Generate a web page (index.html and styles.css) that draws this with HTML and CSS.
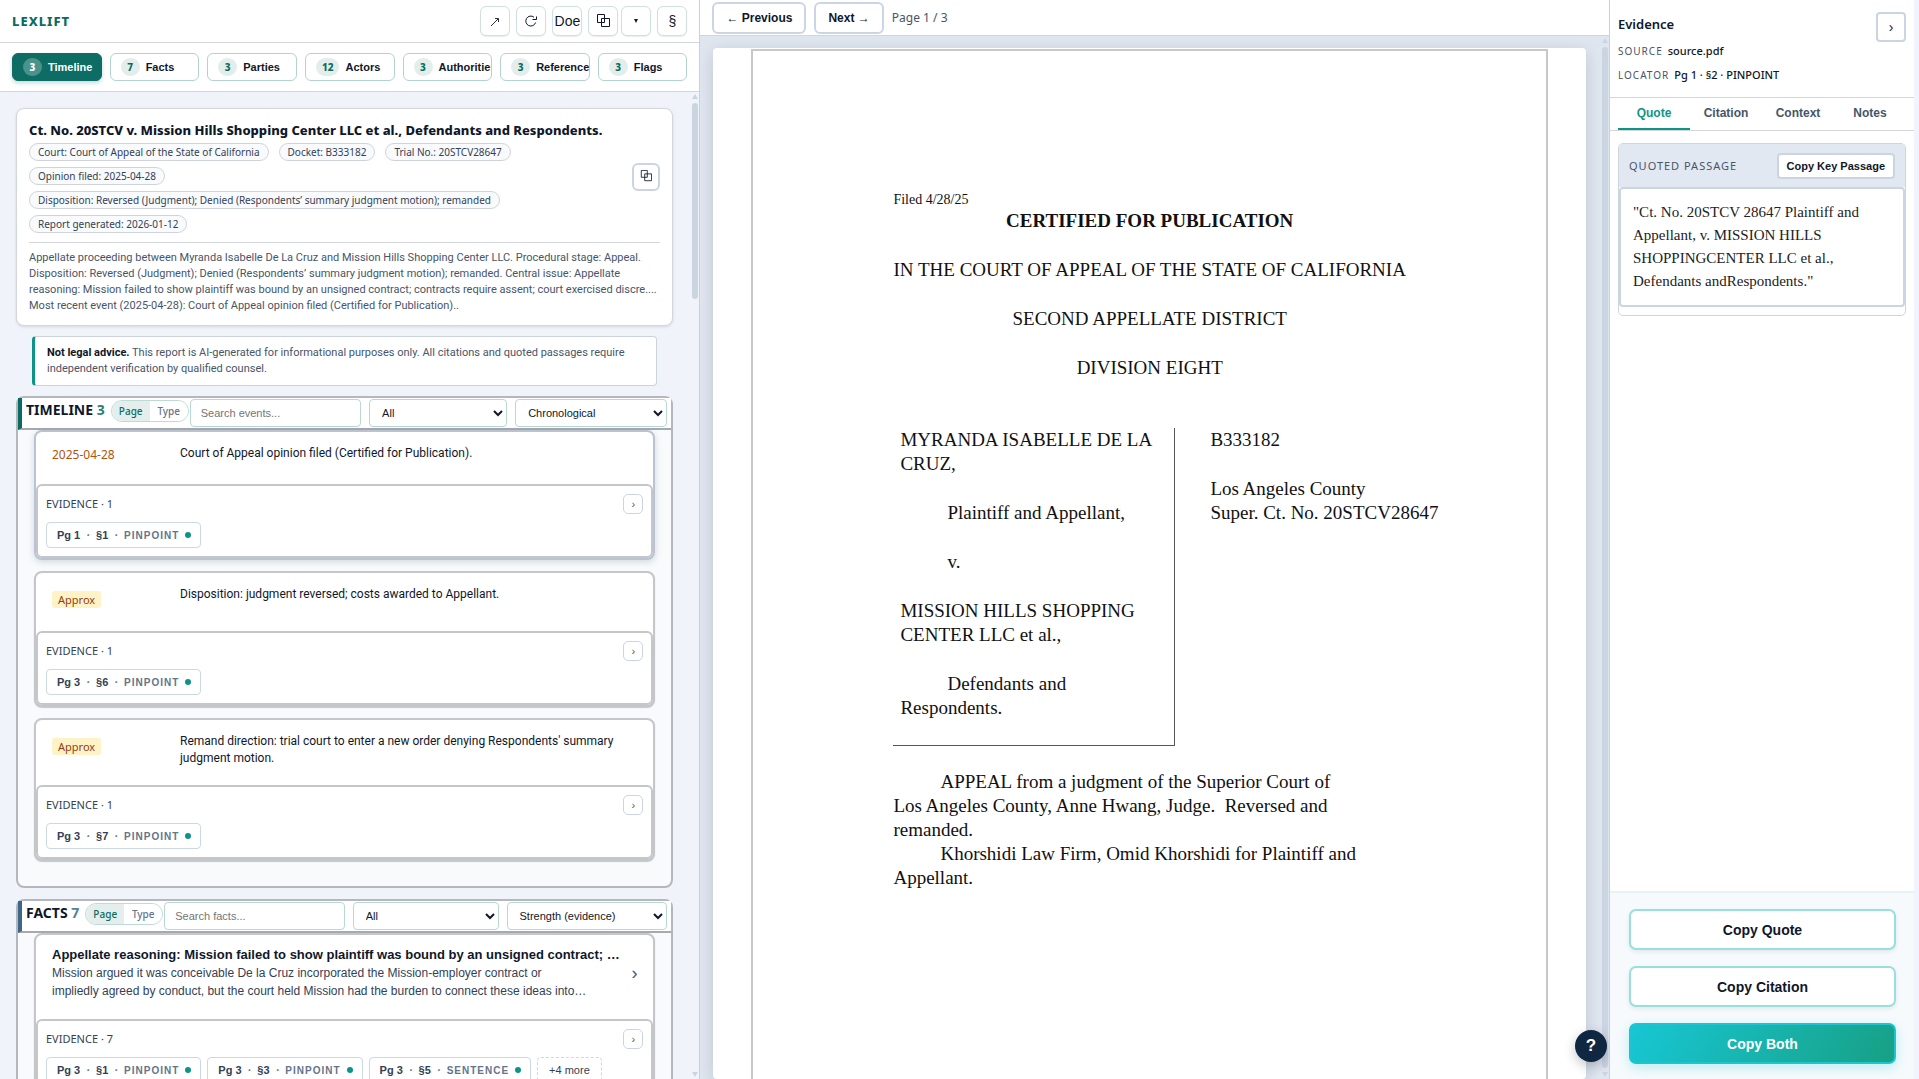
FILE: index.html
```html
<!DOCTYPE html>
<html lang="en">
<head>
<meta charset="utf-8">
<title>LexLift report</title>
<link rel="stylesheet" href="styles.css">
</head>
<body>
<svg class="defs" aria-hidden="true">
  <symbol id="copy" viewBox="0 0 14 14"><path d="M1.500 .5h7v8h-7zM5.500 4.500h8v8h-8z" fill="none" stroke="currentColor"/></symbol>
</svg>
<div class="app">
  <section class="report">
    <header class="topbar">
      <span class="brand">LEXLIFT</span>
      <div class="tools">
        <button class="tool" aria-label="Open"><svg width="12" height="12" viewBox="0 0 12 12"><path d="M2 11 9 4M6 3.500H9.500V7" fill="none" stroke="currentColor" stroke-width=".9"/></svg></button>
        <button class="tool" aria-label="Refresh"><svg width="14" height="14" viewBox="0 0 14 14"><path d="M10 3.200A5 5 0 1 0 11.600 8.500M12.500 2.500V5.500H8.500" fill="none" stroke="currentColor"/></svg></button>
        <button class="tool">Doe</button>
        <span class="split">
          <button class="tool" aria-label="Copy"><svg width="14" height="14"><use href="#copy"/></svg></button>
          <button class="tool" aria-label="More"><svg width="4" height="4" viewBox="0 0 4 4"><path d="M0 0h4L2 4z" fill="currentColor"/></svg></button>
        </span>
        <button class="tool">§</button>
      </div>
    </header>
    <nav class="tabs">
      <button class="tab active"><b class="count">3</b>Timeline</button>
      <button class="tab"><b class="count">7</b>Facts</button>
      <button class="tab"><b class="count">3</b>Parties</button>
      <button class="tab"><b class="count">12</b>Actors</button>
      <button class="tab"><b class="count">3</b>Authorities</button>
      <button class="tab"><b class="count">3</b>References</button>
      <button class="tab"><b class="count">3</b>Flags</button>
    </nav>
    <div class="scroller">
      <main class="content">
        <article class="case">
          <div class="case-head">
            <div class="case-info">
              <h1>Ct. No. 20STCV v. Mission Hills Shopping Center LLC et al., Defendants and Respondents.</h1>
              <ul class="chips">
                <li>Court: Court of Appeal of the State of California</li>
                <li>Docket: B333182</li>
                <li>Trial No.: 20STCV28647</li>
                <li>Opinion filed: 2025-04-28</li>
                <li>Disposition: Reversed (Judgment); Denied (Respondents’ summary judgment motion); remanded</li>
                <li>Report generated: 2026-01-12</li>
              </ul>
            </div>
            <button class="copy-case" aria-label="Copy case"><svg width="12" height="12"><use href="#copy"/></svg></button>
          </div>
          <p class="summary">Appellate proceeding between Myranda Isabelle De La Cruz and Mission Hills Shopping Center LLC. Procedural stage: Appeal.<br>Disposition: Reversed (Judgment); Denied (Respondents’ summary judgment motion); remanded. Central issue: Appellate<br>reasoning: Mission failed to show plaintiff was bound by an unsigned contract; contracts require assent; court exercised discre....<br>Most recent event (2025-04-28): Court of Appeal opinion filed (Certified for Publication)..</p>
        </article>
        <p class="notice"><strong>Not legal advice.</strong> This report is AI-generated for informational purposes only. All citations and quoted passages require<br>independent verification by qualified counsel.</p>

        <section class="group timeline">
          <header class="group-head">
            <h2>TIMELINE <span>3</span></h2>
            <div class="toggle"><button class="on">Page</button><button>Type</button></div>
            <div class="filters">
              <input type="search" placeholder="Search events..." aria-label="Search events">
              <select class="kind" aria-label="Event type"><option>All</option></select>
              <select class="sort" aria-label="Sort events"><option>Chronological</option></select>
            </div>
          </header>
          <div class="cards">
            <article class="card selected">
              <div class="event"><time class="date">2025-04-28</time><p>Court of Appeal opinion filed (Certified for Publication).</p></div>
              <div class="evidence">
                <div class="ev-head"><span>EVIDENCE · 1</span><button class="mini" aria-label="Expand">›</button></div>
                <div class="refs"><button class="ref">Pg 1 <i>·</i> §1 <i>·</i> <span>PINPOINT</span><em></em></button></div>
              </div>
            </article>
            <article class="card">
              <div class="event"><span class="approx">Approx</span><p>Disposition: judgment reversed; costs awarded to Appellant.</p></div>
              <div class="evidence">
                <div class="ev-head"><span>EVIDENCE · 1</span><button class="mini" aria-label="Expand">›</button></div>
                <div class="refs"><button class="ref">Pg 3 <i>·</i> §6 <i>·</i> <span>PINPOINT</span><em></em></button></div>
              </div>
            </article>
            <article class="card">
              <div class="event"><span class="approx">Approx</span><p>Remand direction: trial court to enter a new order denying Respondents' summary judgment motion.</p></div>
              <div class="evidence">
                <div class="ev-head"><span>EVIDENCE · 1</span><button class="mini" aria-label="Expand">›</button></div>
                <div class="refs"><button class="ref">Pg 3 <i>·</i> §7 <i>·</i> <span>PINPOINT</span><em></em></button></div>
              </div>
            </article>
          </div>
        </section>

        <section class="group facts">
          <header class="group-head">
            <h2>FACTS <span>7</span></h2>
            <div class="toggle"><button class="on">Page</button><button>Type</button></div>
            <div class="filters">
              <input type="search" placeholder="Search facts..." aria-label="Search facts">
              <select class="kind" aria-label="Fact type"><option>All</option></select>
              <select class="sort" aria-label="Sort facts"><option>Strength (evidence)</option></select>
            </div>
          </header>
          <div class="cards">
            <article class="card">
              <div class="fact">
                <div class="fact-text">
                  <h3>Appellate reasoning: Mission failed to show plaintiff was bound by an unsigned contract; …</h3>
                  <p>Mission argued it was conceivable De la Cruz incorporated the Mission-employer contract or<br>impliedly agreed by conduct, but the court held Mission had the burden to connect these ideas into…</p>
                </div>
                <span class="chev">›</span>
              </div>
              <div class="evidence">
                <div class="ev-head"><span>EVIDENCE · 7</span><button class="mini" aria-label="Expand">›</button></div>
                <div class="refs">
                  <button class="ref">Pg 3 <i>·</i> §1 <i>·</i> <span>PINPOINT</span><em></em></button>
                  <button class="ref">Pg 3 <i>·</i> §3 <i>·</i> <span>PINPOINT</span><em></em></button>
                  <button class="ref">Pg 3 <i>·</i> §5 <i>·</i> <span>SENTENCE</span><em></em></button>
                  <button class="ref more">+4 more</button>
                </div>
              </div>
            </article>
          </div>
        </section>
      </main>
      <div class="rail" aria-hidden="true"><i class="up"></i><i class="thumb short"></i><i class="down"></i></div>
    </div>
  </section>

  <section class="viewer">
    <header class="pager">
      <button>← Previous</button>
      <button>Next →</button>
      <span>Page 1 / 3</span>
    </header>
    <div class="desk">
      <div class="mat">
        <div class="paper">
          <p class="filed">Filed 4/28/25</p>
          <h2>CERTIFIED FOR PUBLICATION</h2>
          <p class="court">IN THE COURT OF APPEAL OF THE STATE OF CALIFORNIA</p>
          <p class="court">SECOND APPELLATE DISTRICT</p>
          <p class="court">DIVISION EIGHT</p>
          <div class="caption">
            <div class="parties">
              <p>MYRANDA ISABELLE DE LA<br>CRUZ,</p>
              <p class="indent">Plaintiff and Appellant,</p>
              <p class="indent">v.</p>
              <p>MISSION HILLS SHOPPING<br>CENTER LLC et al.,</p>
              <p class="indent">Defendants and<br>Respondents.</p>
            </div>
            <div class="docket">
              <p>B333182</p>
              <p>Los Angeles County<br>Super. Ct. No. 20STCV28647</p>
            </div>
          </div>
          <p class="indent">APPEAL from a judgment of the Superior Court of<br>Los Angeles County, Anne Hwang, Judge.&nbsp; Reversed and<br>remanded.</p>
          <p class="indent">Khorshidi Law Firm, Omid Khorshidi for Plaintiff and<br>Appellant.</p>
        </div>
      </div>
      <div class="rail" aria-hidden="true"><i class="up"></i><i class="thumb"></i><i class="down"></i></div>
      <button class="help" aria-label="Help">?</button>
    </div>
  </section>

  <aside class="side">
    <header class="side-head">
      <div>
        <h2>Evidence</h2>
        <p><span>SOURCE</span>source.pdf</p>
        <p><span>LOCATOR</span>Pg 1 · §2 · PINPOINT</p>
      </div>
      <button class="collapse" aria-label="Collapse">›</button>
    </header>
    <nav class="side-tabs">
      <button class="active">Quote</button><button>Citation</button><button>Context</button><button>Notes</button>
    </nav>
    <div class="side-body">
      <section class="passage">
        <header><span>QUOTED PASSAGE</span><button>Copy Key Passage</button></header>
        <blockquote>"Ct. No. 20STCV 28647 Plaintiff and<br>Appellant, v. MISSION HILLS<br>SHOPPINGCENTER LLC et al.,<br>Defendants andRespondents."</blockquote>
      </section>
    </div>
    <footer class="actions">
      <button>Copy Quote</button>
      <button>Copy Citation</button>
      <button class="primary">Copy Both</button>
    </footer>
  </aside>
</div>
</body>
</html>
```
FILE: styles.css
```css
* { box-sizing: border-box; }

body, h1, h2, h3, p, ul, blockquote { margin: 0; padding: 0; }

body {
  font: 12px/16px "Noto Sans", sans-serif;
  color: #0f172a;
  background: #f1f4fd;
}

button, input, select { font: 11px "Liberation Sans", Arial, sans-serif; color: inherit; margin: 0; }
button { padding: 0; background: #fff; border: 1px solid #cbd5e1; cursor: pointer; }
.defs { position: absolute; width: 0; height: 0; }

.app {
  display: grid;
  grid-template-columns: 36.5% minmax(0, 1fr) 310px;
  height: 100vh;
  overflow: hidden;
}

/* Report column */
.report {
  display: flex;
  flex-direction: column;
  min-width: 0;
  min-height: 0;
  border-right: 1px solid #cbd0d8;
  background: #fff;
}

.topbar {
  display: flex;
  align-items: center;
  justify-content: space-between;
  flex: none;
  height: 43px;
  padding: 0 12px;
  border-bottom: 1px solid #d3d6db;
}

.brand { font-size: 13px; font-weight: 800; letter-spacing: 1px; color: #0b6b60; }
.tools { display: flex; gap: 6px; }
.split { display: flex; gap: 3px; }

.tool {
  display: flex;
  align-items: center;
  justify-content: center;
  width: 30px;
  height: 30px;
  border-color: #cfe1de;
  border-radius: 6px;
  font-size: 14px;
  box-shadow: 0 1px 1px #0f172a14;
}

.tabs {
  display: flex;
  flex: none;
  gap: 8px;
  padding: 10px 12px;
  border-bottom: 1px solid #d3d6db;
}

.tab {
  display: flex;
  align-items: center;
  flex: 1 1 0;
  gap: 6px;
  min-width: 0;
  height: 28px;
  padding: 0 10px;
  overflow: hidden;
  border-color: #b3d3ce;
  border-radius: 6px;
  font-weight: 700;
  white-space: nowrap;
}

.count {
  flex: none;
  min-width: 19px;
  padding: 0 6px;
  border-radius: 9px;
  background: #e3eeec;
  color: #0b6b60;
  font: 800 10px/18px "Noto Sans", sans-serif;
}

.tab.active { background: #0d6c63; border-color: #0d6c63; color: #fff; box-shadow: 0 2px 4px #0d6c6340; }
.active .count { background: #4b928b; color: #fff; }

.scroller { display: flex; flex: 1; min-height: 0; overflow: hidden; background: #f0f3f9; }

.content {
  flex: 1;
  min-width: 0;
  padding: 16px 18px 16px 16px;
}

.rail { display: flex; flex-direction: column; flex: none; align-items: center; width: 8px; padding: 2px 0; }
.rail .thumb { flex: 1; width: 6px; border-radius: 3px; background: #cbd5e1; margin: 4px 0; }
.rail .thumb.short { flex: 0 0 196px; margin-bottom: auto; }
.up, .down { border: 3px solid transparent; }
.up { border-top: 0; border-bottom: 5px solid #cbd5e1; }
.down { border-bottom: 0; border-top: 5px solid #cbd5e1; }

.case {
  padding: 12px 12px 11px;
  border: 1px solid #d3d6dc;
  border-radius: 8px;
  background: #fff;
  box-shadow: 0 1px 3px #0f172a1f;
}

.case-head { display: flex; align-items: center; gap: 16px; padding-bottom: 9px; }
.case-info { flex: 1; min-width: 0; }
h1 { font: 800 13px/18px "Noto Sans", sans-serif; white-space: nowrap; margin-bottom: 4px; }
.chips { display: flex; flex-wrap: wrap; gap: 6px 10px; list-style: none; padding-right: 60px; }

.chips li {
  padding: 0 8px;
  border: 1px solid #d0d4da;
  border-radius: 9px;
  background: #f8fafc;
  color: #334155;
  font-size: 10px;
  line-height: 16px;
}

.copy-case { flex: none; width: 28px; height: 28px; border: 2px solid #cbd5e1; border-radius: 6px; }

.summary {
  padding-top: 7px;
  border-top: 1px solid #d3d6dc;
  color: #475569;
  font: 11px/16px Roboto, sans-serif;
  white-space: nowrap;
}

.notice {
  margin: 10px 16px;
  padding: 8px 12px;
  border: 1px solid #cdd3da;
  border-left: 3px solid #0d9488;
  border-radius: 4px;
  background: #fff;
  color: #475569;
  font: 11px/16px Roboto, sans-serif;
}

.notice strong { color: #0f172a; }

/* Grouped lists */
.group {
  margin-bottom: 11px;
  border: 2px solid #b4b8be;
  border-radius: 8px;
  background: #f8fafc;
}

.group-head {
  display: flex;
  align-items: flex-start;
  height: 32px;
  padding: 0 4px;
  border-bottom: 2px solid #a6a9ae;
  border-left: 4px solid #0b6b60;
  background: #fff;
}

.group-head h2 { margin-right: 6px; font-size: 14px; font-weight: 700; line-height: 24px; white-space: nowrap; }
.group-head h2 span { color: #2a7f76; }
.facts .group-head { border-left-color: #3c6788; }
.facts h2 span { color: #55809c; }

.toggle {
  display: flex;
  flex: none;
  height: 22px;
  margin-top: 2px;
  overflow: hidden;
  border: 1px solid #bddad6;
  border-radius: 11px;
}

.toggle button { width: 38px; border: 0; color: #64748b; font: 500 10px "Noto Sans", sans-serif; }
.toggle .on { background: #e4efed; color: #0b6b60; }
.filters { display: flex; flex: 1; gap: 8px; min-width: 0; margin: 1px 0 0 1px; }

.filters input, .filters select {
  min-width: 0;
  height: 28px;
  padding: 0 10px;
  border: 1px solid #b9d8d3;
  border-radius: 4px;
  background: #fff;
}

.filters select { padding: 0 0 0 8px; }
.filters input { flex: 21 1 0; }
.filters .kind { flex: 18 1 0; }
.filters .sort { flex: 20 1 0; }
.filters ::placeholder { color: #757575; }

.cards { display: flex; flex-direction: column; gap: 11px; padding: 0 16px 25px; }

.card {
  border: 2px solid #c4c6ca;
  border-radius: 8px;
  background: #fff;
  box-shadow: 0 1px 1px #c4c6ca;
}

.card.selected { border-color: #b9c3d1; box-shadow: 0 2px 6px #64748b40; }

.event {
  display: grid;
  grid-template-columns: 114px minmax(0, 1fr);
  gap: 14px;
  align-items: start;
  padding: 13px 24px 18px 16px;
  font: 12px/17px Roboto, sans-serif;
}

.date { padding-bottom: 2px; color: #b45309; font: 12px/19px "Noto Sans", sans-serif; }

.approx {
  justify-self: start;
  margin: 5px 0;
  padding: 0 6px;
  border-radius: 3px;
  background: #fef3c7;
  color: #92400e;
  font: 11px/17px "Noto Sans", sans-serif;
}

.fact { display: flex; align-items: center; padding: 10px 16px 19px; }
.fact-text { flex: 1; min-width: 0; white-space: nowrap; }
.fact h3 { font: 700 13px/19px "Liberation Sans", Arial, sans-serif; }
.fact p { color: #334155; font: 12px/18px "Liberation Sans", Arial, sans-serif; }
.chev { color: #475569; font: 18px/18px "Liberation Sans", Arial, sans-serif; }

.evidence {
  height: 74px;
  padding: 8px;
  border: 2px solid #c4c6ca;
  border-radius: 6px;
}

.ev-head { display: flex; align-items: center; justify-content: space-between; color: #334155; font-size: 11px; }

.mini { width: 20px; height: 20px; border-radius: 5px; color: #475569; line-height: 18px; }
.refs { display: flex; gap: 6px; margin-top: 8px; }

.ref {
  height: 26px;
  padding: 0 9px 0 10px;
  border-color: #cbd9e3;
  border-radius: 4px;
  color: #334155;
  font-weight: 700;
  white-space: nowrap;
}

.ref i { margin: 0 3px; color: #64748b; }
.ref span { color: #64748b; font-size: 10px; letter-spacing: 1px; }

.ref em {
  display: inline-block;
  width: 6px;
  height: 6px;
  margin: 0 0 1px 6px;
  border-radius: 3px;
  background: #0d9488;
}

.ref.more { border-style: dashed; padding: 0 11px; font-weight: 400; }

/* Document viewer */
.viewer { display: flex; flex-direction: column; min-width: 0; min-height: 0; background: #fff; }

.pager {
  display: flex;
  align-items: center;
  flex: none;
  gap: 8px;
  height: 36px;
  padding: 0 12px;
  border-bottom: 1px solid #d0d5dc;
  color: #475569;
}

.pager button {
  height: 32px;
  padding: 0 12px;
  border: 2px solid #cbd5e6;
  border-radius: 6px;
  color: #0f172a;
  font-size: 12px;
  font-weight: 700;
}

.desk {
  position: relative;
  display: flex;
  flex: 1;
  min-height: 0;
  overflow: hidden;
  background: #dfe6ef;
}

.mat {
  flex: 1;
  min-width: 0;
  margin: 12px 15px 0 13px;
  padding: 1px 38px 0;
  border-radius: 4px;
  background: #fff;
  box-shadow: 0 4px 16px #0f172a26;
}

.paper {
  height: 100%;
  padding: 140px 140px 0;
  border: 2px solid #c6c8cc;
  border-bottom: 0;
  color: #111;
  font: 19px/24px "Liberation Serif", "Times New Roman", serif;
  white-space: nowrap;
}

.filed { font-size: 14px; line-height: 18px; }
.paper h2 { margin-bottom: 25px; font-size: 19px; line-height: 24px; text-align: center; }
.court { margin-bottom: 25px; text-align: center; }

.caption { display: grid; grid-template-columns: 282px 1fr; margin: 48px 0 24px; }

.parties {
  display: flex;
  flex-direction: column;
  gap: 25px;
  padding: 0 7px 25px;
  border: solid #555;
  border-width: 0 1px 1px 0;
}

.docket { display: flex; flex-direction: column; gap: 25px; padding-left: 35px; }
.indent { text-indent: 47px; }

.help {
  position: absolute;
  right: 2px;
  bottom: 17px;
  width: 32px;
  height: 32px;
  border: 0;
  border-radius: 16px;
  background: #0f2740;
  color: #fff;
  font-size: 17px;
  font-weight: 700;
  box-shadow: 0 4px 12px #0f172a40;
}

/* Evidence panel */
.side {
  display: flex;
  flex-direction: column;
  min-height: 0;
  margin-right: 5px;
  border-left: 1px solid #cbd0d8;
  background: #fff;
}

.side-head {
  display: flex;
  align-items: flex-start;
  justify-content: space-between;
  height: 98px;
  padding: 12px 8px 0;
  border-bottom: 1px solid #d3d6db;
}

.side-head h2 { margin-bottom: 3px; font-size: 13px; font-weight: 600; line-height: 24px; }
.side-head p { font-size: 11px; font-weight: 500; line-height: 24px; }
.side-head span { margin-right: 5px; color: #475569; font: 10px "Noto Sans", sans-serif; letter-spacing: 1px; }
.collapse { width: 30px; height: 30px; border: 2px solid #cbd5e1; border-radius: 4px; font-size: 14px; }

.side-tabs { display: flex; height: 33px; padding: 0 8px; border-bottom: 1px solid #d3d6db; }

.side-tabs button {
  flex: 1;
  border: 0;
  border-bottom: 2px solid transparent;
  color: #475569;
  font-size: 12px;
  font-weight: 700;
}

.side-tabs .active { border-color: #0d9488; color: #0d9488; }

.side-body { flex: 1; padding: 12px 8px; }

.passage {
  padding-bottom: 8px;
  border: 1px solid #cfd5dd;
  border-radius: 5px;
}

.passage header {
  display: flex;
  align-items: center;
  justify-content: space-between;
  height: 43px;
  padding: 0 10px;
  background: #e2e8f1;
  color: #475569;
  font-size: 11px;
  letter-spacing: 1px;
}

.passage button { height: 26px; padding: 0 8px; border: 2px solid #cbd5e1; border-radius: 4px; color: #0f172a; font-weight: 700; }

.passage blockquote {
  padding: 12px;
  border: 2px solid #cbd5e1;
  border-radius: 4px;
  color: #222;
  font: 15px/23px "Liberation Serif", Georgia, serif;
  white-space: nowrap;
}

.actions {
  display: flex;
  flex-direction: column;
  gap: 16px;
  padding: 16px 18px 15px 19px;
  border-top: 2px solid #e6f2f3;
  background: #f6fafd;
}

.actions button {
  height: 41px;
  border: 2px solid #99e0dd;
  border-radius: 7px;
  font-size: 14px;
  font-weight: 700;
  box-shadow: 0 2px 4px #0f172a14;
}

.actions .primary {
  border-color: #1cc5cf;
  background: linear-gradient(120deg, #17c7d4, #17a085);
  color: #fff;
  box-shadow: 0 4px 12px #17c7d440;
}
```
